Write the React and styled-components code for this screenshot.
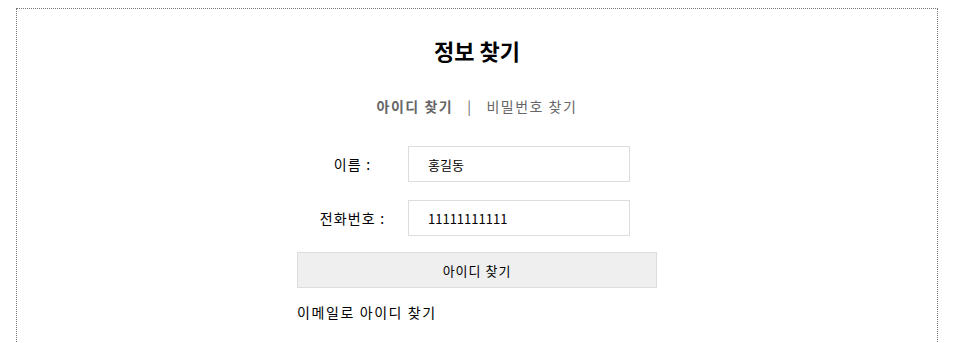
import React from "react";
import styled, { createGlobalStyle } from "styled-components";

const GlobalStyle = createGlobalStyle`
    body {
        margin: 8px;
        background: #fff;
        font-family: "Noto Sans CJK KR", "Noto Sans", sans-serif;
        color: #000;
    }
`
const Wrapper = styled.div`
    box-sizing: border-box;
    width: 922px;
    margin-left: 8px;
    min-height: 400px;
    border: 1px dotted #777;
    border-bottom: none;
    padding-top: 26px;
    display: flex;
    flex-direction: column;
    align-items: center;
`
const Title = styled.h2`
    margin: 0;
    font-size: 22px;
    font-weight: 700;
    line-height: 30px;
`
const TabRow = styled.div`
    margin-top: 31px;
    display: flex;
    align-items: center;
    gap: 14px;
    font-size: 14px;
    line-height: 20px;
    letter-spacing: 1.5px;
    color: #666;
`
const Tab = styled.span`
    font-weight: ${props => (props.active ? 700 : 400)};
    cursor: pointer;
`
const Divider = styled.span`
    color: #666;
`
const Form = styled.form`
    margin-top: 30px;
    width: 360px;
    display: flex;
    flex-direction: column;
`
const Row = styled.div`
    display: flex;
    align-items: center;
    margin-bottom: ${props => props.gap}px;
`
const Label = styled.label`
    width: 111px;
    text-align: center;
    font-size: 14px;
    line-height: 20px;
    letter-spacing: 1.2px;
`
const Input = styled.input`
    box-sizing: border-box;
    width: 222px;
    height: 36px;
    border: 1px solid #ddd;
    padding: 0 0 0 19px;
    font-family: "Noto Sans CJK KR", "Noto Sans", sans-serif;
    font-size: 13px;
    color: #000;
    outline: none;
`
const SubmitBtn = styled.button`
    box-sizing: border-box;
    width: 360px;
    height: 36px;
    background: #efefef;
    border: 1px solid #ddd;
    font-family: "Noto Sans CJK KR", "Noto Sans", sans-serif;
    font-size: 13px;
    letter-spacing: 1px;
    color: #000;
    cursor: pointer;
`
const EmailLink = styled.div`
    margin-top: 14px;
    font-size: 14px;
    line-height: 20px;
    letter-spacing: 1.6px;
    cursor: pointer;
`

function App() {
    return (
        <>
            <GlobalStyle />
            <Wrapper>
                <Title>정보 찾기</Title>
                <TabRow>
                    <Tab active>아이디 찾기</Tab>
                    <Divider>|</Divider>
                    <Tab>비밀번호 찾기</Tab>
                </TabRow>
                <Form onSubmit={e => e.preventDefault()}>
                    <Row gap={18}>
                        <Label>이름 :</Label>
                        <Input defaultValue="홍길동" />
                    </Row>
                    <Row gap={16}>
                        <Label>전화번호 :</Label>
                        <Input defaultValue="11111111111" />
                    </Row>
                    <SubmitBtn type="submit">아이디 찾기</SubmitBtn>
                    <EmailLink>이메일로 아이디 찾기</EmailLink>
                </Form>
            </Wrapper>
        </>
    )
}

export default App;
